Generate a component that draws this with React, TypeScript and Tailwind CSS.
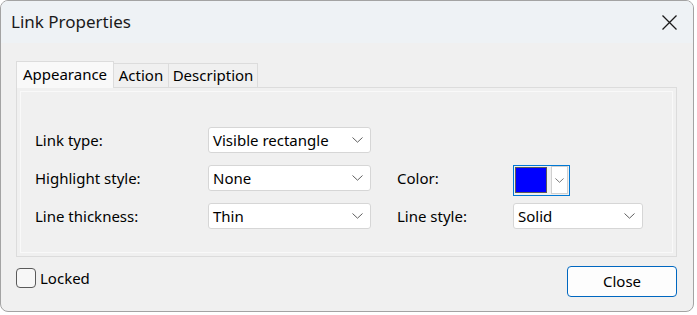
import React from 'react';

const font = { fontFamily: '"Noto Sans", "Open Sans", sans-serif' };

const Chevron: React.FC<{ w?: number }> = ({ w = 11 }) => (
  <svg width={w} height={Math.round(w / 2)} viewBox="0 0 11 6" fill="none">
    <path d="M0.5 0.5 L5.5 5.2 L10.5 0.5" stroke="#5f5f5f" strokeWidth="1" />
  </svg>
);

const Select: React.FC<{ value: string; width: string }> = ({ value, width }) => (
  <div className={`${width} h-[26px] bg-white border border-[#d6d6d6] rounded-[3px] flex items-center justify-between pl-[4px] pr-[7px]`}>
    <span className="text-[15px] text-black leading-none">{value}</span>
    <Chevron />
  </div>
);

const App: React.FC = () => {
  return (
    <div className="w-[697px] h-[315px] bg-white" style={font}>
      <div className="w-[694px] h-[312px] rounded-[8px] border border-[#a3a3a3] overflow-hidden flex flex-col bg-[#f0f0f0]">
        <div className="h-[42px] bg-[#eef2f5] flex items-center justify-between pl-[10px] pr-[16px] shrink-0">
          <span className="text-[17px] text-[#1a1a1a]">Link Properties</span>
          <svg width="15" height="15" viewBox="0 0 15 15">
            <path d="M0.5 0.5 L14.5 14.5 M14.5 0.5 L0.5 14.5" stroke="#1a1a1a" strokeWidth="1.3" />
          </svg>
        </div>

        <div className="pl-[15px] pr-[16px] pt-[17px] flex flex-col">
          <div className="flex items-end h-[27px]">
            <div className="h-[27px] w-[98px] bg-[#f9f9f9] border border-b-0 border-[#dcdcdc] flex items-center justify-center text-[15px] text-black relative z-10 -mb-px pb-[2px]">
              Appearance
            </div>
            <div className="h-[24px] w-[55px] bg-[#f0f0f0] border border-l-0 border-b-0 border-[#dcdcdc] flex items-center justify-center text-[15px] text-black">
              Action
            </div>
            <div className="h-[24px] w-[89px] bg-[#f0f0f0] border border-l-0 border-b-0 border-[#dcdcdc] flex items-center justify-center text-[15px] text-black">
              Description
            </div>
          </div>

          <div className="h-[170px] border border-[#dcdcdc] bg-[#f0f0f0] p-[3px]">
            <div className="h-full border border-[#f9f9f9] pt-[35px] pl-[14px] flex flex-col gap-[12px]">
              <div className="flex items-center h-[26px]">
                <span className="w-[173px] text-[15px] text-black">Link type:</span>
                <Select value="Visible rectangle" width="w-[163px]" />
              </div>
              <div className="flex items-center h-[26px]">
                <span className="w-[173px] text-[15px] text-black">Highlight style:</span>
                <Select value="None" width="w-[163px]" />
                <span className="ml-[26px] w-[116px] text-[15px] text-black">Color:</span>
                <div className="w-[57px] h-[31px] border border-[#0078d4] flex items-center p-[1px] gap-[4px] mt-[4px]">
                  <div className="w-[32px] h-[26px] bg-[#0000ff] border border-[#5a5a5a]" />
                  <div className="w-[17px] h-[28px] bg-white border border-[#d0d0d0] flex items-center justify-center">
                    <Chevron w={9} />
                  </div>
                </div>
              </div>
              <div className="flex items-center h-[26px]">
                <span className="w-[173px] text-[15px] text-black">Line thickness:</span>
                <Select value="Thin" width="w-[163px]" />
                <span className="ml-[26px] w-[116px] text-[15px] text-black">Line style:</span>
                <Select value="Solid" width="w-[130px]" />
              </div>
            </div>
          </div>

          <div className="flex justify-between items-start mt-[9px]">
            <div className="flex items-center gap-[4px] mt-[1px]">
              <div className="w-[20px] h-[20px] rounded-[4px] border border-[#5a5a5a] bg-[#f7f7f7]" />
              <span className="text-[15px] text-black">Locked</span>
            </div>
            <div className="w-[110px] h-[31px] rounded-[4px] border border-[#0067c0] bg-[#fdfdfd] flex items-center justify-center text-[15px] text-black">
              Close
            </div>
          </div>
        </div>
      </div>
    </div>
  );
};

export default App;
